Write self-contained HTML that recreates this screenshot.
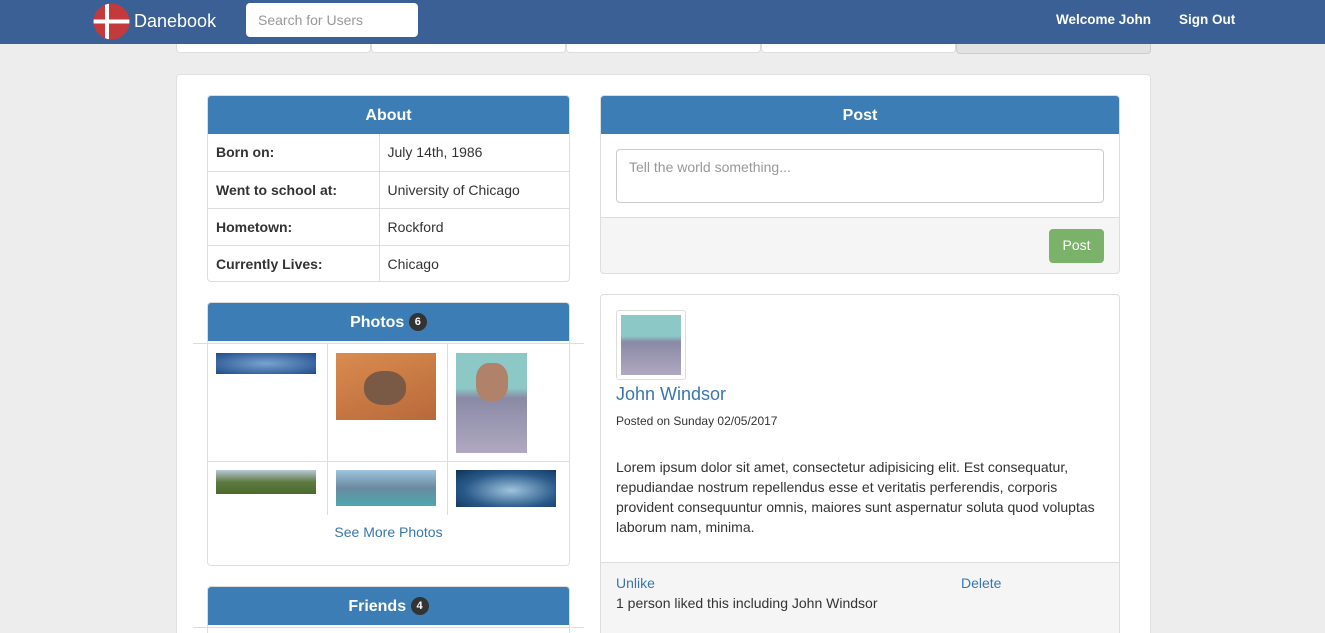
<!DOCTYPE html><html style="height:633px;overflow:hidden"><head><style>
*{box-sizing:border-box}body{margin:0;width:1325px;height:633px;overflow:hidden;background:#ededed;font-family:"Liberation Sans",sans-serif;font-size:14px;color:#333;position:relative}
.a{position:absolute}
.nav{left:0;top:0;width:1325px;height:44px;background:#3b6095}
.hd{background:#3c7db5;color:#fff;font-weight:bold;font-size:16px;text-align:center;line-height:39px;height:38px;border-radius:3px 3px 0 0}
.badge{display:inline-block;background:#333;color:#fff;font-size:11px;border-radius:10px;padding:2px 6px;line-height:14px;vertical-align:2px}
.pan{background:#fff;border:1px solid #ddd;border-radius:4px}
table{border-collapse:collapse;width:100%}td{border-top:1px solid #ddd;height:37px;padding:0 8px}
a{color:#3a76ad;text-decoration:none}
</style></head><body>
<div class="a nav"></div>
<svg class="a" style="left:93px;top:3px" width="37" height="37" viewBox="0 0 37 37"><clipPath id="c"><circle cx="18.5" cy="18.5" r="18"/></clipPath><g clip-path="url(#c)"><rect width="37" height="37" fill="#c33a3d"/><rect x="12" y="0" width="4" height="37" fill="#fff"/><rect x="0" y="16.5" width="37" height="4" fill="#fff"/></g></svg>
<div class="a" style="left:134px;top:11px;color:#fff;font-size:18px">Danebook</div>
<div class="a" style="left:246px;top:3px;width:172px;height:34px;background:#fff;border-radius:4px;color:#999;padding:9px 12px">Search for Users</div>
<div class="a" style="left:1056px;top:12px;color:#fff;font-weight:bold;font-size:13.5px">Welcome John</div>
<div class="a" style="left:1179px;top:12px;color:#fff;font-weight:bold;font-size:13.5px">Sign Out</div>
<div class="a" style="left:176px;top:44px;width:195px;height:9px;background:#fff;border:1px solid #ddd;border-top:0;border-radius:0 0 4px 4px"></div>
<div class="a" style="left:371px;top:44px;width:195px;height:9px;background:#fff;border:1px solid #ddd;border-top:0;border-radius:0 0 4px 4px"></div>
<div class="a" style="left:566px;top:44px;width:195px;height:9px;background:#fff;border:1px solid #ddd;border-top:0;border-radius:0 0 4px 4px"></div>
<div class="a" style="left:761px;top:44px;width:195px;height:9px;background:#fff;border:1px solid #ddd;border-top:0;border-radius:0 0 4px 4px"></div>
<div class="a" style="left:956px;top:44px;width:195px;height:10px;background:#e2e2e2;border:1px solid #ccc;border-top:0;border-radius:0 0 4px 4px"></div>
<div class="a" style="left:176px;top:74px;width:975px;height:559px;background:#fff;border:1px solid #e0e0e0;border-bottom:0;border-radius:4px 4px 0 0"></div>

<div class="a pan" style="left:207px;top:95px;width:363px;height:187px">
<div class="hd">About</div>
<table><tr><td style="width:171px;border-top:0;border-right:1px solid #ddd;font-weight:bold">Born on:</td><td style="border-top:0">July 14th, 1986</td></tr>
<tr><td style="border-right:1px solid #ddd;font-weight:bold">Went to school at:</td><td>University of Chicago</td></tr>
<tr><td style="border-right:1px solid #ddd;font-weight:bold">Hometown:</td><td>Rockford</td></tr>
<tr><td style="border-right:1px solid #ddd;font-weight:bold">Currently Lives:</td><td>Chicago</td></tr></table></div>

<div class="a pan" style="left:207px;top:302px;width:363px;height:264px"><div class="hd">Photos <span class="badge">6</span></div></div>
<div class="a" style="left:193px;top:343px;width:391px;height:1px;background:#ddd"></div>
<div class="a" style="left:208px;top:461px;width:361px;height:1px;background:#ddd"></div>
<div class="a" style="left:327px;top:344px;width:1px;height:171px;background:#ddd"></div>
<div class="a" style="left:447px;top:344px;width:1px;height:171px;background:#ddd"></div>
<div class="a" style="left:216px;top:353px;width:100px;height:21px;background:radial-gradient(ellipse at center,#7aa3d0,#1d4c8a)"></div>
<div class="a" style="left:336px;top:353px;width:100px;height:67px;background:linear-gradient(160deg,#d98c4f,#b8693a);"><div style="position:absolute;left:28px;top:18px;width:42px;height:34px;border-radius:45%;background:#7a5a45"></div></div>
<div class="a" style="left:456px;top:353px;width:71px;height:100px;background:linear-gradient(#8cc9c6 0,#8cc9c6 35%,#8a8aa6 45%,#b0a8c0);"><div style="position:absolute;left:20px;top:10px;width:32px;height:38px;border-radius:40%;background:#b0826a"></div></div>
<div class="a" style="left:216px;top:470px;width:100px;height:24px;background:linear-gradient(#b8c8d8,#5e7a40 50%,#4a6a2a)"></div>
<div class="a" style="left:336px;top:470px;width:100px;height:36px;background:linear-gradient(#9fc3df,#6a8aa0 50%,#4fa7b0)"></div>
<div class="a" style="left:456px;top:470px;width:100px;height:37px;background:radial-gradient(ellipse at 55% 55%,#9fc4de,#2a5a8a 60%,#0e3358)"></div>
<div class="a" style="left:208px;top:524px;width:361px;text-align:center"><a>See More Photos</a></div>

<div class="a pan" style="left:207px;top:586px;width:363px;height:47px;border-bottom:0;border-radius:4px 4px 0 0"><div class="hd">Friends <span class="badge">4</span></div></div>
<div class="a" style="left:193px;top:627px;width:391px;height:1px;background:#ddd"></div>

<div class="a pan" style="left:600px;top:95px;width:520px;height:179px;background:#f5f5f5">
<div class="hd">Post</div><div style="background:#fff;height:84px;border-bottom:1px solid #ddd;padding:15px"><div style="height:54px;border:1px solid #ccc;border-radius:4px;padding:9px 12px;color:#999">Tell the world something...</div></div>
<div style="position:absolute;right:15px;top:133px;width:55px;height:34px;background:#7bb26a;border-radius:4px;color:#fff;text-align:center;line-height:33px">Post</div></div>

<div class="a pan" style="left:600px;top:294px;width:520px;height:339px;overflow:hidden;border-bottom:0;border-radius:4px 4px 0 0">
<div style="position:absolute;left:15px;top:15px;width:70px;height:70px;border:1px solid #ddd;border-radius:3px;padding:4px"><div style="width:60px;height:60px;background:linear-gradient(#8cc9c6 0,#8cc9c6 35%,#8a8aa6 45%,#b0a8c0)"></div></div>
<div style="position:absolute;left:15px;top:89px;font-size:18px;color:#3a76ad">John Windsor</div>
<div style="position:absolute;left:15px;top:119px;font-size:12px">Posted on Sunday 02/05/2017</div>
<div style="position:absolute;left:15px;top:162px;width:490px;line-height:20px">Lorem ipsum dolor sit amet, consectetur adipisicing elit. Est consequatur, repudiandae nostrum repellendus esse et veritatis perferendis, corporis provident consequuntur omnis, maiores sunt aspernatur soluta quod voluptas laborum nam, minima.</div>
<div style="position:absolute;left:0;top:267px;width:520px;height:72px;background:#f5f5f5;border-top:1px solid #ddd"></div>
<div style="position:absolute;left:15px;top:280px"><a>Unlike</a></div>
<div style="position:absolute;left:360px;top:280px"><a>Delete</a></div>
<div style="position:absolute;left:15px;top:300px">1 person liked this including John Windsor</div>
</div>
</body></html>
